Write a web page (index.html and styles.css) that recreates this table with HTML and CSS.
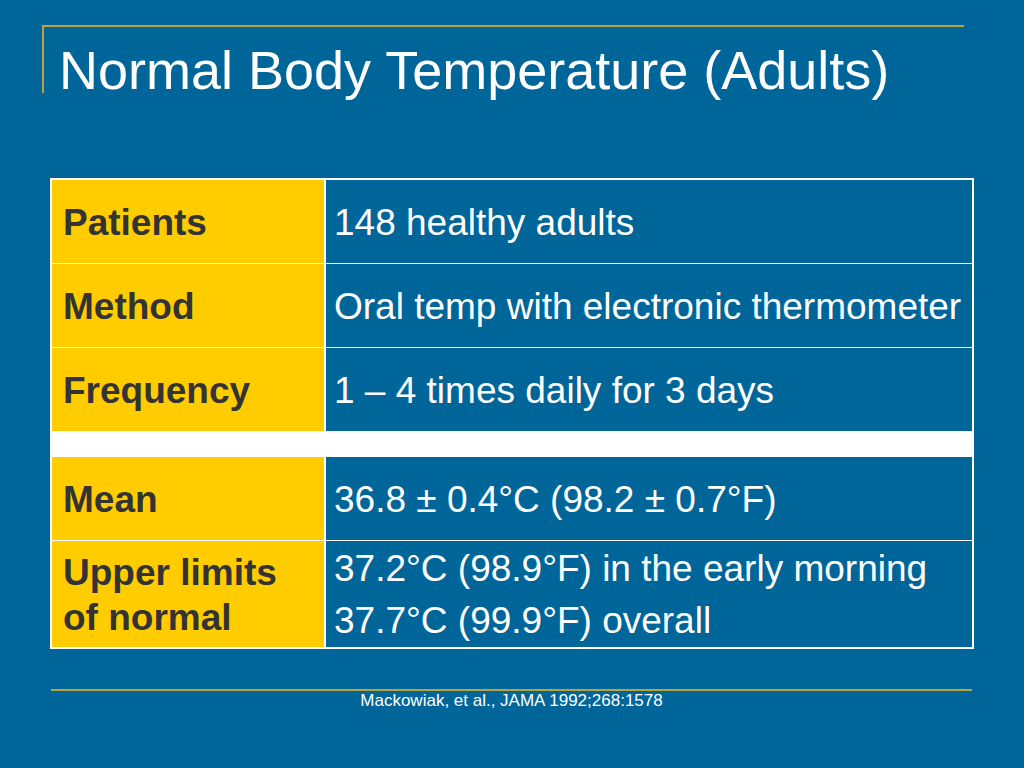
FILE: index.html
```html
<!DOCTYPE html>
<html lang="en">
<head>
<meta charset="utf-8">
<title>Normal Body Temperature (Adults)</title>
<link rel="stylesheet" href="styles.css">
</head>
<body>
<div class="slide">
  <header class="header">
    <h1 class="title">Normal Body Temperature (Adults)</h1>
  </header>
  <div class="grid">
    <div class="label">Patients</div>
    <div class="value">148 healthy adults</div>
    <div class="label">Method</div>
    <div class="value">Oral temp with electronic thermometer</div>
    <div class="label">Frequency</div>
    <div class="value">1 – 4 times daily for 3 days</div>
    <div class="band"></div>
    <div class="label">Mean</div>
    <div class="value">36.8 ± 0.4°C (98.2 ± 0.7°F)</div>
    <div class="label tall"><span class="two">Upper limits<br>of normal</span></div>
    <div class="value tall"><span class="lines"><span class="ln">37.2°C (98.9°F) in the early morning</span><span class="ln">37.7°C (99.9°F) overall</span></span></div>
  </div>
  <footer class="footer">
    <div class="rule"></div>
    <p class="cite">Mackowiak, et al., JAMA 1992;268:1578</p>
  </footer>
</div>
</body>
</html>
```

FILE: styles.css
```css
html, body {
  margin: 0;
  padding: 0;
}
body {
  background: #00669a;
  width: 1024px;
  height: 768px;
  overflow: hidden;
  font-family: "Liberation Sans", Arial, sans-serif;
}
.slide {
  padding-top: 25px;
}
.header {
  margin-left: 42px;
  width: 920px;
  height: 66px;
  border-top: 2px solid #bca23a;
  border-left: 2px solid #bca23a;
  box-sizing: content-box;
}
.title {
  margin: 16px 0 0 0;
  padding-left: 15px;
  font-size: 54px;
  line-height: 54px;
  font-weight: normal;
  color: #ffffff;
  white-space: nowrap;
}
.grid {
  margin: 85px 0 0 50px;
  width: 924px;
  box-sizing: border-box;
  padding: 2px;
  background: #ffffff;
  display: grid;
  grid-template-columns: 272px 1fr;
  grid-template-rows: 83px 83px 83px 24px 83px 106px;
  column-gap: 2px;
  row-gap: 1px;
}
.label {
  background: #ffcc00;
  color: #333333;
  font-weight: bold;
  font-size: 37px;
  display: flex;
  align-items: center;
  padding-left: 11px;
  padding-top: 2px;
  white-space: nowrap;
}
.value {
  background: #00669a;
  color: #ffffff;
  font-size: 37px;
  display: flex;
  align-items: center;
  padding-left: 8px;
  padding-top: 2px;
  white-space: nowrap;
}
.band {
  grid-column: 1 / 3;
  background: #ffffff;
  padding: 0;
}
.two {
  line-height: 45px;
}
.lines {
  display: flex;
  flex-direction: column;
}
.ln {
  line-height: 52px;
}
.footer {
  margin: 40px 0 0 51px;
  width: 921px;
}
.rule {
  height: 2px;
  background: #bca23a;
}
.cite {
  margin: 0;
  text-align: center;
  font-size: 17px;
  color: #ffffff;
}
```
